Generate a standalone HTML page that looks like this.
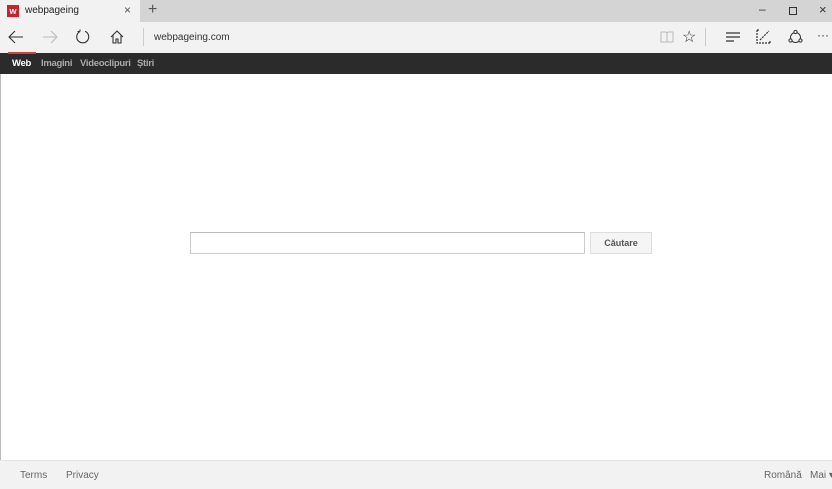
<!DOCTYPE html>
<html><head><meta charset="utf-8"><style>
*{margin:0;padding:0;box-sizing:border-box}
body{width:832px;height:489px;overflow:hidden;background:#fff;font-family:"Liberation Sans",Arial,sans-serif;position:relative}
.tabbar{position:absolute;left:0;top:0;width:832px;height:22px;background:#d4d4d4}
.tab{position:absolute;left:0;top:0;width:140px;height:22px;background:#f2f2f2}
.fav{position:absolute;left:7px;top:5px;width:12px;height:12px;background:#c8232c;color:#fff;font-size:9px;font-weight:bold;text-align:center;line-height:12px}
.t{position:absolute;font-size:11px;color:#222;white-space:nowrap}
.toolbar{position:absolute;left:0;top:22px;width:832px;height:31px;background:#f2f2f2}
.nav{position:absolute;left:0;top:53px;width:832px;height:21px;background:#2b2b2b}
.nav span{position:absolute;top:5px;font-size:9.5px;font-weight:bold;color:#aaa;letter-spacing:-0.3px;white-space:nowrap}
.red{position:absolute;left:8px;top:52px;width:28px;height:2px;background:#c44}
.leftline{position:absolute;left:0;top:74px;width:1px;height:386px;background:#bbb}
.input{position:absolute;left:190px;top:232px;width:395px;height:22px;border:1px solid #ccc;border-top-color:#bbb;background:#fff}
.btn{position:absolute;left:590px;top:232px;width:62px;height:22px;border:1px solid #ddd;background:#f5f5f5;font-size:9px;font-weight:bold;color:#555;text-align:center;line-height:20px}
.footer{position:absolute;left:0;top:460px;width:832px;height:29px;background:#f2f2f2;border-top:1px solid #e4e4e4}
.footer span{position:absolute;top:9px;font-size:10px;color:#666;white-space:nowrap}
svg{position:absolute}
</style></head><body>
<div class="tabbar"></div>
<div class="tab"></div>
<div class="fav">w</div>
<div class="t" style="left:25px;top:5px;font-size:10px">webpageing</div>
<div class="t" style="left:124px;top:3px;font-size:12px;color:#555">×</div>
<div class="t" style="left:148px;top:1px;font-size:16px;color:#555">+</div>
<div class="t" style="left:759px;top:2px;font-size:12px;color:#333">–</div>
<div style="position:absolute;left:789px;top:7px;width:8px;height:8px;border:1px solid #333"></div>
<div class="t" style="left:819px;top:2px;font-size:13px;color:#333">×</div>
<div class="toolbar"></div>
<svg style="left:8px;top:30px" width="16" height="14" viewBox="0 0 16 14"><path d="M15 7H2M7 1L1 7l6 6" fill="none" stroke="#333" stroke-width="1.1"/></svg>
<svg style="left:42px;top:30px" width="16" height="14" viewBox="0 0 16 14"><path d="M1 7h13M9 1l6 6-6 6" fill="none" stroke="#bbb" stroke-width="1.1"/></svg>
<svg style="left:75px;top:29px" width="16" height="16" viewBox="0 0 16 16"><path d="M5 2.5A6 6 0 1 0 10 2.3M5 2.5V0.5M5 2.5H2.5" fill="none" stroke="#333" stroke-width="1.1"/></svg>
<svg style="left:110px;top:30px" width="14" height="14" viewBox="0 0 14 14"><path d="M1 7L7 1l6 6M3 5v8h3V9h2v4h3V5" fill="none" stroke="#333" stroke-width="1.1"/></svg>
<div style="position:absolute;left:143px;top:28px;width:1px;height:18px;background:#ccc"></div>
<div class="t" style="left:154px;top:32px;font-size:10px;color:#333">webpageing.com</div>
<svg style="left:660px;top:31px" width="14" height="12" viewBox="0 0 14 12"><path d="M1 1h5l1 1 1-1h5v10H1zM7 2v9" fill="none" stroke="#bbb" stroke-width="1"/></svg>
<div class="t" style="left:682px;top:27px;font-size:16px;color:#333">☆</div>
<div style="position:absolute;left:705px;top:28px;width:1px;height:18px;background:#ccc"></div>
<svg style="left:726px;top:32px" width="14" height="10" viewBox="0 0 14 10"><path d="M0 1h14M0 5h14M0 9h8" stroke="#333" stroke-width="1.2"/></svg>
<svg style="left:756px;top:29px" width="15" height="15" viewBox="0 0 15 15"><path d="M1 1v13h13M1 1h3M14 14v-3M4 11l9-9" fill="none" stroke="#333" stroke-width="1.2" stroke-dasharray="2 1"/></svg>
<svg style="left:788px;top:29px" width="15" height="15" viewBox="0 0 15 15"><circle cx="7.5" cy="8.5" r="5" fill="none" stroke="#333"/><circle cx="7.5" cy="3" r="1.6" fill="#f2f2f2" stroke="#333"/><circle cx="2.5" cy="11.5" r="1.6" fill="#f2f2f2" stroke="#333"/><circle cx="12.5" cy="11.5" r="1.6" fill="#f2f2f2" stroke="#333"/></svg>
<div class="t" style="left:817px;top:28px;font-size:12px;color:#333">···</div>
<div class="nav"><span style="left:12px;color:#fff">Web</span><span style="left:41px">Imagini</span><span style="left:80px">Videoclipuri</span><span style="left:137px">Știri</span></div>
<div class="red"></div>
<div class="leftline"></div>
<div class="input"></div>
<div class="btn">Căutare</div>
<div class="footer"><span style="left:20px">Terms</span><span style="left:66px">Privacy</span><span style="left:764px">Română</span><span style="left:810px">Mai ▾</span></div>
</body></html>
